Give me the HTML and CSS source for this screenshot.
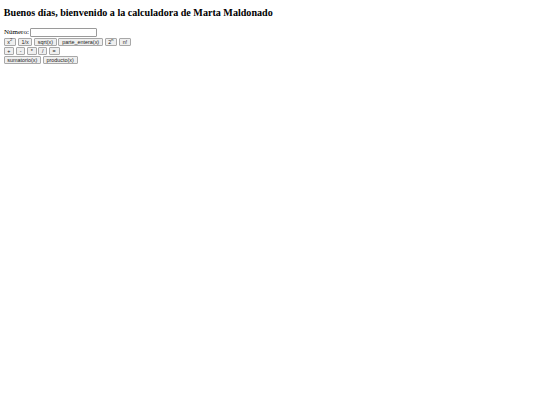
FILE: index.html
```html
<!DOCTYPE html>
<html lang="es">
<head>
<meta charset="utf-8">
<title>Calculadora</title>
<link rel="stylesheet" href="styles.css">
</head>
<body class="page">
<h2 class="title">Buenos días, bienvenido a la calculadora de Marta Maldonado</h2>
<div class="row row-input">
  <label class="label" for="num">Número:</label>
  <input class="num-input" id="num" type="text">
</div>
<div class="row">
  <button class="btn">x<sup class="sup">2</sup></button>
  <button class="btn">1/x</button>
  <button class="btn">sqrt(x)</button>
  <button class="btn">parte_entera(x)</button>
  <button class="btn">2<sup class="sup">n</sup></button>
  <button class="btn">n!</button>
</div>
<div class="row">
  <button class="btn">+</button>
  <button class="btn">-</button>
  <button class="btn">*</button>
  <button class="btn">/</button>
  <button class="btn">=</button>
</div>
<div class="row">
  <button class="btn">sumatorio(x)</button>
  <button class="btn">producto(x)</button>
</div>
</body>
</html>
```

FILE: styles.css
```css
html, body {
  background: #ffffff;
}
.page {
  margin: 0;
  padding: 7px 3.5px 0 3.5px;
  font-family: "Liberation Serif", "Times New Roman", serif;
  font-size: 7px;
  color: #000;
}
.title {
  font-size: 10.1px;
  font-weight: bold;
  margin: 0 0 8.5px 0.3px;
  line-height: 12px;
  color: #000;
}
.row {
  display: flex;
  align-items: center;
  gap: 1.6px;
  height: 8.7px;
}
.row-input {
  align-items: flex-start;
  height: 10.5px;
  gap: 1.2px;
}
.label {
  line-height: 8px;
  margin-left: 0.5px;
  color: #000;
}
.num-input {
  width: 67px;
  height: 9.5px;
  box-sizing: border-box;
  border: 1px solid #9a9a9a;
  border-radius: 1px;
  padding: 0;
  margin: 0;
  font-size: 6px;
  background: #fff;
}
.btn {
  font-family: "Liberation Sans", Arial, sans-serif;
  font-size: 5.4px;
  height: 8px;
  line-height: 6px;
  padding: 0 2.8px;
  border: 1px solid #a8a8a8;
  border-radius: 1px;
  background: #efefef;
  color: #222;
  margin: 0;
}
.sup {
  font-size: 4px;
  vertical-align: super;
  line-height: 0;
}
```
